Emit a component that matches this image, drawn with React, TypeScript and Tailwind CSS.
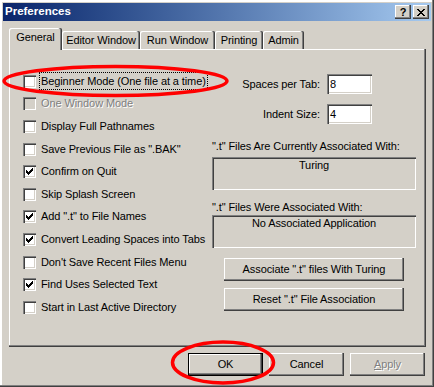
import React from "react";

const raised =
  "shadow-[inset_-1px_-1px_#404040,inset_-2px_-2px_#808080,inset_1px_1px_#ffffff]";
const sunken =
  "shadow-[inset_1px_1px_#808080,inset_2px_2px_#404040,inset_-1px_-1px_#ffffff,inset_-2px_-2px_#d4d0c8]";

interface Option {
  label: string;
  checked?: boolean;
  disabled?: boolean;
  focus?: boolean;
}

const options: Option[] = [
  { label: "Beginner Mode (One file at a time)", focus: true },
  { label: "One Window Mode", disabled: true },
  { label: "Display Full Pathnames" },
  { label: 'Save Previous File as ".BAK"' },
  { label: "Confirm on Quit", checked: true },
  { label: "Skip Splash Screen" },
  { label: 'Add ".t" to File Names', checked: true },
  { label: "Convert Leading Spaces into Tabs", checked: true },
  { label: "Don't Save Recent Files Menu" },
  { label: "Find Uses Selected Text", checked: true },
  { label: "Start in Last Active Directory" },
];

const tabs = [
  { label: "General", w: "w-[53px]" },
  { label: "Editor Window", w: "w-[78px]" },
  { label: "Run Window", w: "w-[75px]" },
  { label: "Printing", w: "w-[48px]" },
  { label: "Admin", w: "w-[41px]" },
];

function Check() {
  return (
    <svg width="7" height="7" viewBox="0 0 7 7" shapeRendering="crispEdges">
      <path d="M0 2h1v3h-1z M1 3h1v3h-1z M2 4h1v3h-1z M3 3h1v3h-1z M4 2h1v3h-1z M5 1h1v3h-1z M6 0h1v3h-1z" fill="#000" />
    </svg>
  );
}

function CheckRow({ opt }: { opt: Option }) {
  return (
    <div className="flex items-center h-[22.6px] gap-[4px]">
      <div
        className={`w-[13px] h-[13px] flex items-center justify-center ${sunken} ${
          opt.disabled ? "bg-[#d4d0c8]" : "bg-white"
        }`}
      >
        {opt.checked && <Check />}
      </div>
      <span
        className={`px-px whitespace-nowrap ${
          opt.focus ? "py-px leading-[14px] outline-1 outline-dotted outline-black" : "leading-[13px]"
        } ${opt.disabled ? "text-[#808080] [text-shadow:1px_1px_#ffffff]" : "text-black"}`}
      >
        {opt.label}
      </span>
    </div>
  );
}

function Button({ children, className = "" }: { children: React.ReactNode; className?: string }) {
  return (
    <div className={`h-[23px] flex items-center justify-center bg-[#d4d0c8] ${raised} ${className}`}>
      {children}
    </div>
  );
}

export default function App() {
  return (
    <div className="relative w-[434px] h-[387px] bg-[#d4d0c8] p-[3px] flex flex-col font-['Liberation_Sans',Arial,sans-serif] text-[11px] tracking-[-0.1px] text-black shadow-[inset_-1px_-1px_#404040,inset_-2px_-2px_#808080,inset_2px_2px_#ffffff]">
      {/* Title bar */}
      <div className="h-[18px] flex items-center justify-between bg-gradient-to-r from-[#0a246a] to-[#a6caf0] pl-[2px] pr-[2px]">
        <span className="text-white font-bold text-[11.5px] tracking-normal">Preferences</span>
        <div className="flex gap-[2px]">
          <div className={`w-[16px] h-[14px] bg-[#d4d0c8] flex items-center justify-center font-bold text-[11px] leading-none tracking-normal ${raised}`}>
            ?
          </div>
          <div className={`w-[16px] h-[14px] bg-[#d4d0c8] flex items-center justify-center ${raised}`}>
            <svg width="8" height="7" viewBox="0 0 8 7" shapeRendering="crispEdges">
              <path d="M0 0h2v1h-2z M1 1h2v1h-2z M2 2h4v1h-4z M3 3h2v1h-2z M2 4h4v1h-4z M1 5h2v1h-2z M0 6h2v1h-2z M6 0h2v1h-2z M5 1h2v1h-2z M5 5h2v1h-2z M6 6h2v1h-2z" fill="#000" />
            </svg>
          </div>
        </div>
      </div>

      {/* Tabs */}
      <div className="flex items-end h-[21px] mt-[7px] ml-[6px]">
        {tabs.map((t, i) =>
          i === 0 ? (
            <div
              key={t.label}
              className={`relative z-10 ${t.w} h-[22px] -mb-px pb-[4px] flex items-center justify-center bg-[#d4d0c8] rounded-tl-[2px] rounded-tr-[2px] shadow-[inset_-1px_0_#404040,inset_-2px_0_#808080,inset_1px_1px_#ffffff]`}
            >
              {t.label}
            </div>
          ) : (
            <div
              key={t.label}
              className={`${t.w} h-[18px] flex items-center justify-center bg-[#d4d0c8] rounded-tl-[2px] rounded-tr-[2px] shadow-[inset_-1px_0_#404040,inset_-2px_0_#808080,inset_1px_1px_#ffffff]`}
            >
              {t.label}
            </div>
          )
        )}
      </div>

      {/* Panel */}
      <div className="ml-[6px] w-[417px] h-[298px] flex shadow-[inset_-1px_-1px_#404040,inset_-2px_-2px_#808080,inset_1px_1px_#ffffff]">
        <div className="w-[203px] pl-[14px] pt-[21px] flex flex-col">
          {options.map((o) => (
            <CheckRow key={o.label} opt={o} />
          ))}
        </div>

        <div className="w-[204px] pt-[25px] flex flex-col">
          <div className="w-[160px] flex items-center justify-end gap-[7px]">
            <span>Spaces per Tab:</span>
            <div className={`w-[45px] h-[20px] bg-white pl-[3px] flex items-center ${sunken}`}>8</div>
          </div>
          <div className="w-[160px] mt-[10px] flex items-center justify-end gap-[7px]">
            <span>Indent Size:</span>
            <div className={`w-[45px] h-[20px] bg-white pl-[3px] flex items-center ${sunken}`}>4</div>
          </div>

          <div className="mt-[16px] leading-[13px] whitespace-nowrap">".t" Files Are Currently Associated With:</div>
          <div className={`mt-[4px] h-[33px] pt-[2px] text-center leading-[13px] ${sunken}`}>Turing</div>

          <div className="mt-[11px] leading-[13px] whitespace-nowrap">".t" Files Were Associated With:</div>
          <div className={`mt-[1px] h-[33px] pt-[2px] text-center leading-[13px] ${sunken}`}>No Associated Application</div>

          <Button className="mt-[10px] ml-[12px] w-[180px]">Associate ".t" files With Turing</Button>
          <Button className="mt-[7px] ml-[12px] w-[180px]">Reset ".t" File Association</Button>
        </div>
      </div>

      {/* Dialog buttons */}
      <div className="flex justify-end gap-[6px] pt-[6px] pr-[6px]">
        <div className="w-[75px] h-[23px] border border-black">
          <Button className="w-full h-full">OK</Button>
        </div>
        <Button className="w-[75px]">Cancel</Button>
        <Button className="w-[75px] text-[#808080] [text-shadow:1px_1px_#ffffff]">
          <span>
            <span className="underline">A</span>pply
          </span>
        </Button>
      </div>

      {/* Red annotation ellipses */}
      <svg className="absolute inset-0 pointer-events-none" width="434" height="387" viewBox="0 0 434 387">
        <ellipse cx="115.5" cy="81" rx="111.5" ry="14.5" fill="none" stroke="#ff0000" strokeWidth="3.5" />
        <ellipse cx="223" cy="362.5" rx="50.5" ry="20.5" fill="none" stroke="#ff0000" strokeWidth="3.5" />
      </svg>
    </div>
  );
}
